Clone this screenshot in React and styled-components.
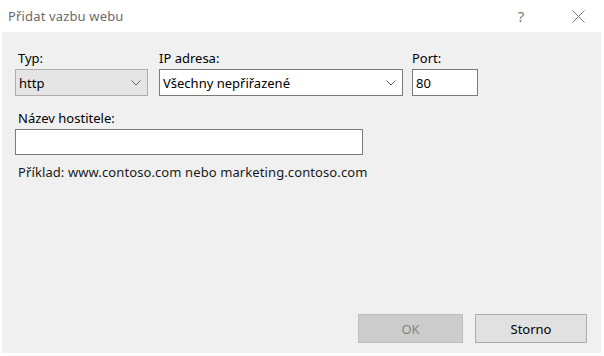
import React from "react";
import styled, { createGlobalStyle } from "styled-components";

const GlobalStyle = createGlobalStyle`
  html, body {
    margin: 0;
    padding: 0;
    background: #ffffff;
  }
  body {
    font-family: "Noto Sans", "Open Sans", sans-serif;
    font-size: 13px;
    color: #000;
  }
`;

const Window = styled.div`
  width: 604px;
  height: 356px;
  display: flex;
  flex-direction: column;
  background: #ffffff;
  box-sizing: border-box;
`;

const TitleBar = styled.div`
  height: 32px;
  display: flex;
  align-items: center;
  padding-left: 8px;
  flex-shrink: 0;
`;

const Title = styled.span`
  flex: 1;
  font-size: 13px;
  color: #6b6b6b;
  letter-spacing: 0.15px;
`;

const TitleButton = styled.span`
  width: 46px;
  height: 32px;
  display: flex;
  align-items: center;
  justify-content: center;
  color: #7a7a7a;
  font-size: 15px;
`;

const Panel = styled.div`
  flex: 1;
  margin: 0 3px 3px 2px;
  background: #f0f0f0;
  display: flex;
  flex-direction: column;
  padding: 18px 14px 10px 13px;
`;

const Row = styled.div`
  display: flex;
  gap: ${p => p.$gap || 0}px;
`;

const Field = styled.div`
  display: flex;
  flex-direction: column;
  width: ${p => p.$width}px;
`;

const Label = styled.label`
  height: 16px;
  line-height: 16px;
  padding-left: ${p => p.$indent ?? 3}px;
  margin-bottom: 3px;
`;

const Box = styled.div`
  height: ${p => p.$height || 27}px;
  box-sizing: border-box;
  border: 1px solid ${p => (p.$readonly ? "#adadad" : "#7a7a7a")};
  background: ${p => (p.$readonly ? "#e5e5e5" : "#ffffff")};
  display: flex;
  align-items: center;
  padding: 0 6px 0 3px;
`;

const BoxText = styled.span`
  flex: 1;
  color: #000;
`;

const Example = styled.div`
  margin-top: 9px;
  height: 16px;
  line-height: 16px;
  padding-left: 3px;
  color: #1a1a1a;
  letter-spacing: 0.1px;
`;

const Spacer = styled.div`
  flex: 1;
`;

const Buttons = styled.div`
  display: flex;
  justify-content: flex-end;
  gap: 12px;
`;

const Button = styled.div`
  width: ${p => p.$width}px;
  height: 29px;
  box-sizing: border-box;
  display: flex;
  align-items: center;
  justify-content: center;
  border: 1px solid ${p => (p.$disabled ? "#bfbfbf" : "#adadad")};
  background: ${p => (p.$disabled ? "#cccccc" : "#e1e1e1")};
  color: ${p => (p.$disabled ? "#838383" : "#000")};
`;

const Chevron = () => (
  <svg width="10" height="6" viewBox="0 0 10 6">
    <path d="M0.5 0.5 L5 5 L9.5 0.5" fill="none" stroke="#606060" strokeWidth="1" />
  </svg>
);

const CloseIcon = () => (
  <svg width="13" height="13" viewBox="0 0 13 13">
    <path d="M0.5 0.5 L12.5 12.5 M12.5 0.5 L0.5 12.5" fill="none" stroke="#7a7a7a" strokeWidth="1" />
  </svg>
);

export default function App() {
  return (
    <Window>
      <GlobalStyle />
      <TitleBar>
        <Title>Přidat vazbu webu</Title>
        <TitleButton>?</TitleButton>
        <TitleButton style={{ marginLeft: 11, marginRight: 3 }}>
          <CloseIcon />
        </TitleButton>
      </TitleBar>
      <Panel>
        <Row $gap={11}>
          <Field $width={133}>
            <Label>Typ:</Label>
            <Box $readonly>
              <BoxText>http</BoxText>
              <Chevron />
            </Box>
          </Field>
          <Field $width={244}>
            <Label $indent={0}>IP adresa:</Label>
            <Box>
              <BoxText>Všechny nepřiřazené</BoxText>
              <Chevron />
            </Box>
          </Field>
          <Field $width={66} style={{ marginLeft: -2 }}>
            <Label $indent={0}>Port:</Label>
            <Box>
              <BoxText>80</BoxText>
            </Box>
          </Field>
        </Row>
        <Row style={{ marginTop: 14 }}>
          <Field $width={348}>
            <Label>Název hostitele:</Label>
            <Box $height={26} />
          </Field>
        </Row>
        <Example>Příklad: www.contoso.com nebo marketing.contoso.com</Example>
        <Spacer />
        <Buttons>
          <Button $width={105} $disabled>OK</Button>
          <Button $width={112}>Storno</Button>
        </Buttons>
      </Panel>
    </Window>
  );
}
